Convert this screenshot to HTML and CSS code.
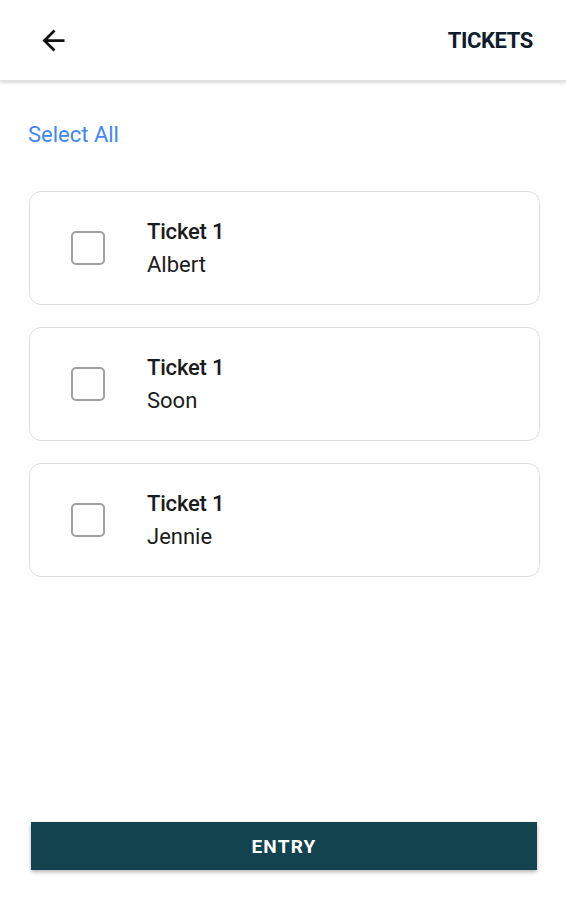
FILE: index.html
```html
<!DOCTYPE html>
<html lang="en">
<head>
    <meta charset="UTF-8">
    <meta name="viewport" content="width=device-width, initial-scale=1.0">
    <title>Tickets</title>
    <link rel="stylesheet" href="styles.css">
</head>
<body>
    <div class="page">
        <header class="topbar">
            <button class="back-btn" aria-label="Back">
                <svg viewBox="0 0 24 24" width="33" height="33"><path d="M20 11H7.83l5.59-5.59L12 4l-8 8 8 8 1.41-1.41L7.83 13H20v-2z"/></svg>
            </button>
            <span class="title">TICKETS</span>
        </header>
        <main class="content">
            <a class="select-all" href="#">Select All</a>
            <div class="ticket-list">
                <label class="ticket">
                    <span class="check"></span>
                    <span class="ticket-info">
                        <span class="ticket-name">Ticket 1</span>
                        <span class="ticket-owner">Albert</span>
                    </span>
                </label>
                <label class="ticket">
                    <span class="check"></span>
                    <span class="ticket-info">
                        <span class="ticket-name">Ticket 1</span>
                        <span class="ticket-owner">Soon</span>
                    </span>
                </label>
                <label class="ticket">
                    <span class="check"></span>
                    <span class="ticket-info">
                        <span class="ticket-name">Ticket 1</span>
                        <span class="ticket-owner">Jennie</span>
                    </span>
                </label>
            </div>
        </main>
        <footer class="footer">
            <button class="entry-btn">ENTRY</button>
        </footer>
    </div>
</body>
</html>
```

FILE: styles.css
```css
body {
    margin: 0;
    background: #fff;
    font-family: 'Roboto', 'Liberation Sans', sans-serif;
    color: #1b1b1b;
}
.page {
    height: 100vh;
    display: flex;
    flex-direction: column;
}
.topbar {
    height: 80px;
    flex-shrink: 0;
    display: flex;
    align-items: center;
    justify-content: space-between;
    padding: 0 33px 0 37px;
    box-shadow: 0 2px 3px rgba(0, 0, 0, 0.14);
    border-bottom: 1px solid #e2e2e2;
}
.back-btn {
    border: none;
    background: none;
    padding: 0;
    display: flex;
    cursor: pointer;
}
.back-btn svg {
    fill: #111;
}
.title {
    font-size: 22px;
    font-weight: 700;
    color: #0f1d2b;
    letter-spacing: -0.4px;
}
.content {
    padding: 41px 26px 0 28px;
}
.select-all {
    display: block;
    font-size: 22px;
    line-height: 26px;
    color: #4287f5;
    text-decoration: none;
    margin-bottom: 43px;
}
.ticket-list {
    display: flex;
    flex-direction: column;
    gap: 22px;
    margin-left: 1px;
}
.ticket {
    height: 112px;
    border: 1px solid #dcdcdc;
    border-radius: 12px;
    display: flex;
    align-items: center;
    padding-left: 41px;
}
.check {
    width: 30px;
    height: 30px;
    border: 2px solid #a0a0a0;
    border-radius: 5px;
    margin-right: 42px;
}
.ticket-info {
    display: flex;
    flex-direction: column;
}
.ticket-name {
    font-size: 22px;
    font-weight: 500;
    line-height: 33px;
    letter-spacing: -0.2px;
}
.ticket-owner {
    font-size: 22px;
    line-height: 33px;
}
.footer {
    margin-top: auto;
    padding: 0 29px 30px 31px;
}
.entry-btn {
    width: 100%;
    height: 48px;
    border: none;
    background: #12434f;
    color: #fff;
    font-family: 'Roboto', 'Liberation Sans', sans-serif;
    font-size: 19px;
    font-weight: 700;
    letter-spacing: 1.2px;
    box-shadow: 0 2px 4px rgba(0, 0, 0, 0.3);
}
```
